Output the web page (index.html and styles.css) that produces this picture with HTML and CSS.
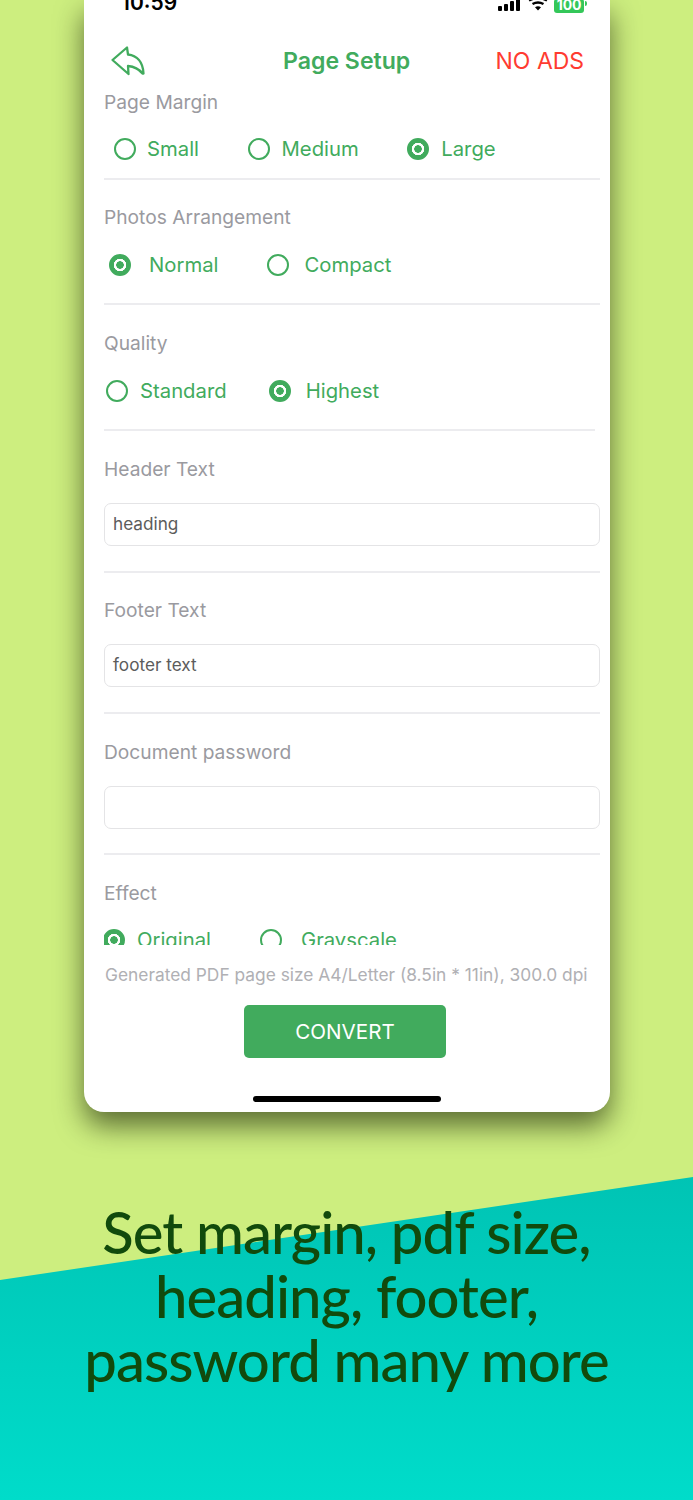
FILE: index.html
```html
<!DOCTYPE html>
<html lang="en">
<head>
<meta charset="utf-8">
<title>Page Setup</title>
<link rel="stylesheet" href="styles.css">
</head>
<body>
<main class="page">
  <section class="phone">
    <div class="status">
      <span class="clock">10:59</span>
      <span class="status-icons">
        <svg class="signal" width="24" height="12" viewBox="0 0 24 12"><rect x="0" y="7" width="4" height="5" rx="1"/><rect x="6" y="5" width="4" height="7" rx="1"/><rect x="12" y="2" width="4" height="10" rx="1"/><rect x="18" y="0" width="4" height="12" rx="1"/></svg>
        <svg class="wifi" width="20" height="12" viewBox="0 0 20 12"><path d="M1 1.500C6 -1.500 14 -1.500 19 1.500M4.500 5C8 3 12 3 15.500 5" fill="none" stroke="#000" stroke-width="2.400"/><path d="M7 8.200Q10 6.500 13 8.200L10 11.500Z"/></svg>
        <span class="battery">100</span><span class="battery-tip"></span>
      </span>
    </div>
    <header class="nav">
      <svg class="back" width="36" height="32" viewBox="0 0 36 32"><path d="M2.500 15L17 2.500L18 9.500C27 10.500 33 17 33.500 28.500L32.500 28.500C29 24 24 21.500 18 21L18.500 29Z" fill="none" stroke="#41ab5d" stroke-width="2.300" stroke-linejoin="round"/></svg>
      <h1 class="title">Page Setup</h1>
      <span class="no-ads">NO ADS</span>
    </header>
    <div class="group g-margin">
      <div class="label">Page Margin</div>
      <div class="opts r1">
        <span class="opt"><i class="radio"></i><span class="t11">Small</span></span>
        <span class="opt"><i class="radio"></i><span class="t12">Medium</span></span>
        <span class="opt"><i class="radio on"></i><span class="t12">Large</span></span>
      </div>
    </div>
    <div class="group h125 tight">
      <div class="label">Photos Arrangement</div>
      <div class="opts r2">
        <span class="opt"><i class="radio on"></i><span class="t18">Normal</span></span>
        <span class="opt"><i class="radio"></i><span class="t15">Compact</span></span>
      </div>
    </div>
    <div class="group h126 short">
      <div class="label">Quality</div>
      <div class="opts r3">
        <span class="opt"><i class="radio"></i><span class="t12">Standard</span></span>
        <span class="opt"><i class="radio on"></i><span class="t15">Highest</span></span>
      </div>
    </div>
    <div class="group h142">
      <div class="label">Header Text</div>
      <div class="field">heading</div>
    </div>
    <div class="group h141 tight">
      <div class="label">Footer Text</div>
      <div class="field">footer text</div>
    </div>
    <div class="group h141">
      <div class="label">Document password</div>
      <div class="field"></div>
    </div>
    <div class="group-last">
      <div class="label">Effect</div>
      <div class="opts r4">
        <span class="opt"><i class="radio on"></i><span class="t12">Original</span></span>
        <span class="opt"><i class="radio"></i><span class="t19">Grayscale</span></span>
      </div>
    </div>
    <p class="note">Generated PDF page size A4/Letter (8.5in * 11in), 300.0 dpi</p>
    <button class="convert">CONVERT</button>
    <div class="home"></div>
  </section>
  <section class="hero">
    <div class="band"></div>
    <h2 class="headline">Set margin, pdf size,<br>heading, footer,<br>password many more</h2>
  </section>
</main>
</body>
</html>
```
FILE: styles.css
```css
* { box-sizing: border-box; }
html, body { margin: 0; padding: 0; }
body { background: #cdee7f; font-family: Inter, "Liberation Sans", sans-serif; }
.page { position: relative; width: 693px; height: 1500px; overflow: hidden; }
.phone {
  position: relative; z-index: 2;
  width: 526px; height: 1112px; margin-left: 84px;
  background: #fff; border-radius: 0 0 20px 20px;
  box-shadow: 0 14px 28px rgba(30, 40, 10, .65);
  padding: 0 10px 0 20px; overflow: hidden;
}
.status { display: flex; justify-content: space-between; height: 13px; overflow: hidden; padding: 0 0 0 17px; }
.clock { font-size: 21px; font-weight: 600; line-height: 20px; margin-top: -7px; color: #000; }
.status-icons { display: flex; align-items: flex-start; margin-right: 13px; gap: 6px; margin-top: -1px; }
.battery {
  width: 30px; height: 14px; border-radius: 3px; background: #34c759; color: #fff;
  font-size: 14px; font-weight: 700; line-height: 12px; text-align: center; letter-spacing: -.2px;
}
.battery-tip { width: 2px; height: 5px; background: #34c759; margin: 2px 0 0 -5px; border-radius: 0 2px 2px 0; }
.nav { display: flex; align-items: center; height: 64px; margin-top: 16px; position: relative; }
.back { margin-left: 6px; flex: none; }
.title { position: absolute; left: 179px; margin: 0; font-size: 23.1px; font-weight: 600; color: #41ab5d; line-height: 32px; }
.no-ads { position: absolute; left: 391.5px; font-size: 23px; color: #ff3b30; line-height: 32px; }
.group { border-bottom: 2px solid #ececef; padding-top: 26px; width: 496px; }
.tight { padding-top: 25px; }
.h125 { height: 125px; } .h126 { height: 126px; } .h141 { height: 141px; } .h142 { height: 142px; }
.g-margin { height: 90px; padding-top: 0; margin-top: -3px; }
.short { width: 491px; }
.group-last { height: 90px; padding-top: 26px; overflow: hidden; width: 496px; }
.label { font-size: 19.2px; line-height: 24px; color: #9a9aa0; }
.opts { display: flex; margin-top: 24px; font-size: 20.3px; line-height: 24px; color: #41ab5d; }
.opt { display: flex; align-items: center; }
.radio { width: 22px; height: 22px; border-radius: 50%; border: 2px solid #41ab5d; flex: none; background: #fff; }
.radio.on { background: radial-gradient(circle, #41ab5d 0 3.500px, #fff 4px 6px, #41ab5d 6.500px); }
.t11 { margin-left: 11px; } .t12 { margin-left: 12px; } .t15 { margin-left: 15px; } .t18 { margin-left: 18px; } .t19 { margin-left: 19px; }
.r1 { padding-left: 10px; gap: 48.5px; margin-top: 23px; }
.r2 { padding-left: 5px; gap: 49px; }
.r3 { padding-left: 2px; gap: 42px; }
.r4 { margin-left: -1px; gap: 49px; margin-top: 23px; }
.field {
  height: 43px; margin-top: 22px; padding: 0 8px; border: 1.5px solid #e4e4e6; border-radius: 7px;
  font-size: 17.2px; line-height: 40px; color: #5c5c5c;
}
.note { margin: 18px 0 0 1px; font-size: 17.35px; line-height: 24px; color: #b0b0b4; white-space: nowrap; }
.convert {
  display: block; width: 202px; height: 53px; margin: 18px 0 0 140px; border: 0; border-radius: 5px;
  background: #41ab5d; color: #fff; font: 20.6px Inter, "Liberation Sans", sans-serif;
}
.home { width: 188px; height: 6px; border-radius: 3px; background: #000; margin: 38px 0 0 149px; }
.hero { height: 388px; position: relative; padding-top: 88px; }
.band {
  position: absolute; inset: 0;
  background: linear-gradient(#00bfb0, #00dcca);
  clip-path: polygon(0 168px, 693px 65px, 693px 388px, 0 388px);
}
.headline {
  position: relative; margin: 0; text-align: center;
  font-family: Lato, sans-serif; font-weight: 500; font-size: 58px; line-height: 64px; letter-spacing: -.95px; color: #114a0c;
}
```
